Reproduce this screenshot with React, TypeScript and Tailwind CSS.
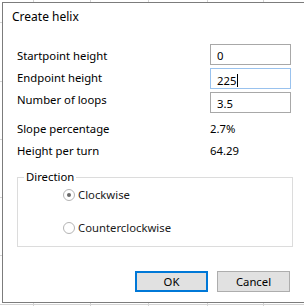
import React from "react";

const font = { fontFamily: '"Noto Sans", "Open Sans", sans-serif' };

// grid lines of the sheet behind the dialog
function SheetGrid() {
  const xs = [33, 90, 148, 207, 263];
  const ys = [22, 81, 139, 197, 255, 304];
  return (
    <svg className="absolute inset-0" width="304" height="306">
      {xs.map((x) => (
        <line key={"x" + x} x1={x + 0.5} y1="0" x2={x + 0.5} y2="306" stroke="#d4d4d4" />
      ))}
      {ys.map((y) => (
        <line key={"y" + y} x1="0" y1={y + 0.5} x2="304" y2={y + 0.5} stroke="#d4d4d4" />
      ))}
    </svg>
  );
}

function Field({ value, focused }: { value: string; focused?: boolean }) {
  return (
    <div
      className={`box-border h-[21px] w-[81px] border bg-white pl-[6px] pt-[3px] leading-[16px] text-black ${
        focused ? "border-[#99c2ee]" : "border-[#a8a8a8]"
      }`}
    >
      {value}
      {focused && <span className="ml-[1px] inline-block h-[13px] w-[1px] translate-y-[2px] bg-black" />}
    </div>
  );
}

function Radio({ label, checked }: { label: string; checked?: boolean }) {
  return (
    <div className="flex h-[20px] items-center">
      <span className="flex h-[12px] w-[12px] items-center justify-center rounded-full border border-[#b4b4b4] bg-white">
        {checked && <span className="h-[4px] w-[4px] rounded-full bg-[#6a6a6a]" />}
      </span>
      <span className="ml-[3px] text-[#1a1a1a]">{label}</span>
    </div>
  );
}

export default function App() {
  return (
    <div className="relative h-[306px] w-[304px] overflow-hidden bg-white text-[11.3px]" style={font}>
      <SheetGrid />
      <div className="relative ml-[2px] mt-[2px] box-border h-[301px] w-[320px] border border-r-0 border-[#7c7c7c] bg-white">
        <div className="pl-[9px] pt-[6px] text-[12px] leading-[16px] text-black">Create helix</div>

        <div className="mt-[19px] flex pl-[14px]">
          <div className="flex w-[193px] flex-col pt-[1px] text-black">
            <div className="h-[22px] leading-[22px]">Startpoint height</div>
            <div className="h-[22px] leading-[22px]">Endpoint height</div>
            <div className="h-[22px] leading-[22px]">Number of loops</div>
          </div>
          <div className="flex flex-col gap-[3px]">
            <Field value="0" />
            <Field value="225" focused />
            <Field value="3.5" />
          </div>
        </div>

        <div className="mt-[5px] flex flex-col pl-[14px] text-black">
          <div className="flex h-[22px] leading-[22px]">
            <span className="w-[193px]">Slope percentage</span>
            <span>2.7%</span>
          </div>
          <div className="flex h-[22px] leading-[22px]">
            <span className="w-[193px]">Height per turn</span>
            <span>64.29</span>
          </div>
        </div>

        <fieldset className="ml-[14px] mt-[7px] box-border h-[78px] w-[276px] border border-[#dcdcdc]">
          <legend className="ml-[6px] px-[2px] leading-[16px] text-black">Direction</legend>
          <div className="flex flex-col gap-[13px] pl-[45px] pt-0">
            <Radio label="Clockwise" checked />
            <Radio label="Counterclockwise" />
          </div>
        </fieldset>

        <div className="mt-[24px] flex gap-[9px] pl-[132px]">
          <button className="box-border h-[21px] w-[73px] border-2 border-[#0078d7] bg-[#e1e1e1] leading-[17px] text-black">
            OK
          </button>
          <button className="box-border h-[21px] w-[73px] border border-[#adadad] bg-[#e1e1e1] leading-[19px] text-black">
            Cancel
          </button>
        </div>
      </div>
    </div>
  );
}
